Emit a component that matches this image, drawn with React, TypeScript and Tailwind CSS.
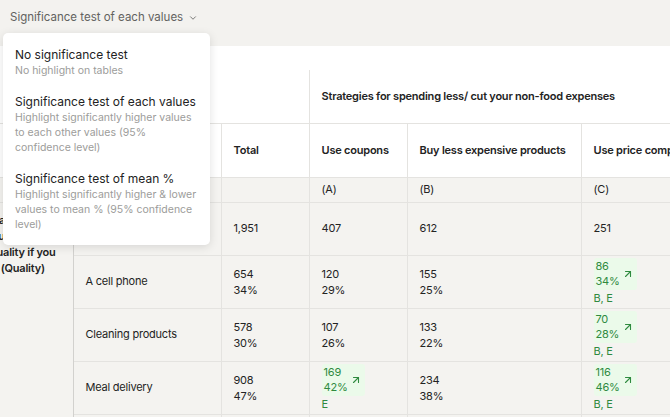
import { ArrowUpRight, ChevronDown } from "lucide-react";

const font = { fontFamily: "Inter, 'Liberation Sans', sans-serif" };

interface Cell {
  n: string;
  p?: string;
  sig?: string;
}

interface Row {
  label: string;
  cells: Cell[];
}

const rows: Row[] = [
  {
    label: "A cell phone",
    cells: [
      { n: "654", p: "34%" },
      { n: "120", p: "29%" },
      { n: "155", p: "25%" },
      { n: "86", p: "34%", sig: "B, E" },
    ],
  },
  {
    label: "Cleaning products",
    cells: [
      { n: "578", p: "30%" },
      { n: "107", p: "26%" },
      { n: "133", p: "22%" },
      { n: "70", p: "28%", sig: "B, E" },
    ],
  },
  {
    label: "Meal delivery",
    cells: [
      { n: "908", p: "47%" },
      { n: "169", p: "42%", sig: "E" },
      { n: "234", p: "38%" },
      { n: "116", p: "46%", sig: "B, E" },
    ],
  },
];

const options = [
  {
    title: "No significance test",
    desc: "No highlight on tables",
  },
  {
    title: "Significance test of each values",
    desc: "Highlight significantly higher values to each other values (95% confidence level)",
  },
  {
    title: "Significance test of mean %",
    desc: "Highlight significantly higher & lower values to mean % (95% confidence level)",
  },
];

const ValueCell = ({ cell }: { cell: Cell }) => {
  if (cell.sig) {
    return (
      <div className="flex flex-col items-start">
        <div className="flex w-[43px] items-center justify-between rounded-[3px] bg-[#ebfaea] py-[1px] pl-[2px] pr-[3px] text-[#2f8a3f]">
          <div className="leading-[15px]">
            <div>{cell.n}</div>
            <div>{cell.p}</div>
          </div>
          <ArrowUpRight size={12} strokeWidth={2.2} />
        </div>
        <div className="mt-[1px] leading-[15px] text-[#2f8a3f]">{cell.sig}</div>
      </div>
    );
  }
  return (
    <div className="leading-[16px]">
      <div>{cell.n}</div>
      {cell.p && <div>{cell.p}</div>}
    </div>
  );
};

const App = () => {
  const td = "border border-[#e4e3e0] px-3 align-middle";
  const colEdge = "border-l-0 border-r-[#d2d1ce]";
  return (
    <div className="relative h-[417px] w-[670px] overflow-hidden bg-[#f3f2ef] text-[#232323]" style={font}>
      <div className="flex h-[46px] items-start px-[10px] pt-[9px]">
        <button className="flex items-center gap-[5px] text-[11.5px] text-[#626260]">
          Significance test of each values
          <ChevronDown size={10} strokeWidth={2} />
        </button>
      </div>

      <div className="bg-white pt-6">
        <table className="ml-[-27px] w-[808px] table-fixed border-collapse text-[11px] tracking-[-0.02em]">
          <colgroup>
            <col className="w-[100px]" />
            <col className="w-[148px]" />
            <col className="w-[88px]" />
            <col className="w-[98px]" />
            <col className="w-[174px]" />
            <col className="w-[200px]" />
          </colgroup>
          <tbody>
            <tr className="h-[53px]">
              <td colSpan={3} className="border-b border-[#e4e3e0]" />
              <td colSpan={3} className={`${td} border-t-0 border-r-0 font-semibold`}>
                Strategies for spending less/ cut your non-food expenses
              </td>
            </tr>
            <tr className="h-[54px] font-semibold">
              <td className={`${td} ${colEdge}`} />
              <td className={td} />
              <td className={td}>Total</td>
              <td className={td}>Use coupons</td>
              <td className={td}>Buy less expensive products</td>
              <td className={`${td} whitespace-nowrap`}>Use price comparison</td>
            </tr>
            <tr className="h-[25px] bg-[#f4f3f0]">
              <td className={`${td} ${colEdge}`} />
              <td className={td} />
              <td className={td} />
              <td className={td}>(A)</td>
              <td className={td}>(B)</td>
              <td className={td}>(C)</td>
            </tr>
            <tr className="h-[53px] bg-[#f4f3f0]">
              <td
                rowSpan={5}
                className={`border border-[#e4e3e0] ${colEdge} whitespace-nowrap px-2 pt-[9px] text-center align-top font-semibold leading-[16px]`}
              >
                What would you
                <br />
                buy at lower
                <br />
                quality if you
                <br />
                (Quality)
              </td>
              <td className={td} />
              <td className={td}>1,951</td>
              <td className={td}>407</td>
              <td className={td}>612</td>
              <td className={td}>251</td>
            </tr>
            {rows.map((row) => (
              <tr key={row.label} className="h-[53px] bg-[#f4f3f0]">
                <td className={td}>{row.label}</td>
                {row.cells.map((cell, i) => (
                  <td key={i} className={td}>
                    <ValueCell cell={cell} />
                  </td>
                ))}
              </tr>
            ))}
            <tr className="h-[53px] bg-[#f4f3f0]">
              <td className={td} />
              <td className={td} />
              <td className={td} />
              <td className={td} />
              <td className={td} />
            </tr>
          </tbody>
        </table>
      </div>

      <div className="absolute left-[3px] top-[33px] w-[207px] rounded-[5px] bg-white px-3 pb-[13px] pt-[13px] shadow-[0_2px_10px_rgba(0,0,0,0.12)]">
        {options.map((o, i) => (
          <div key={o.title} className={i > 0 ? "mt-[15px]" : ""}>
            <div className="text-[12px] leading-[17px] text-[#222]">{o.title}</div>
            <div className="text-[10.5px] leading-[15px] text-[#9c9c9a]">{o.desc}</div>
          </div>
        ))}
      </div>
    </div>
  );
};

export default App;
